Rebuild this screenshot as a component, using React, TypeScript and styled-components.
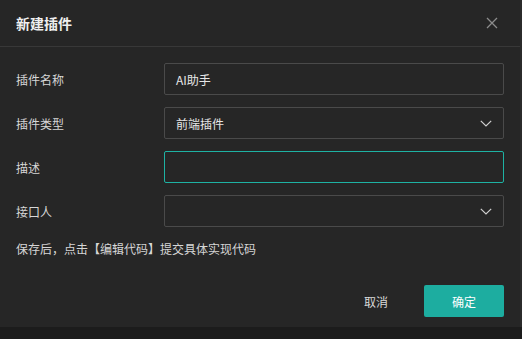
import React from "react";
import styled, { createGlobalStyle } from "styled-components";

const Global = createGlobalStyle`
  html, body { margin: 0; padding: 0; background: #1c1c1c; }
  body { font-family: "Noto Sans CJK SC", "Noto Sans", sans-serif; }
  * { box-sizing: border-box; }
`;

const Stage = styled.div`
  display: flex;
  width: 522px;
  height: 327px;
`;

const Dialog = styled.div`
  width: 520px;
  height: 327px;
  background: #262626;
  display: flex;
  flex-direction: column;
`;

const Strip = styled.div`
  width: 2px;
  background: #2b2b2b;
`;

const Header = styled.div`
  height: 47px;
  display: flex;
  align-items: center;
  justify-content: space-between;
  padding: 0 22px 1px 16px;
  border-bottom: 1px solid #383838;
`;

const Title = styled.div`
  font-size: 14px;
  font-weight: 700;
  color: #efefef;
`;

const Close = styled.button`
  border: 0;
  background: none;
  padding: 0;
  width: 12px;
  height: 12px;
  display: flex;
  cursor: pointer;
`;

const Body = styled.div`
  padding: 16px 16px 0 16px;
  display: flex;
  flex-direction: column;
  gap: 12px;
`;

const Row = styled.div`
  display: flex;
  align-items: center;
  height: 32px;
`;

const Label = styled.div`
  width: 148px;
  font-size: 12px;
  color: #d6d6d6;
`;

const Field = styled.div<{ $focused?: boolean }>`
  flex: 1;
  height: 32px;
  border: 1px solid ${(p) => (p.$focused ? "#1eb2a3" : "#4a4a4a")};
  border-radius: 2px;
  display: flex;
  align-items: center;
  justify-content: space-between;
  padding: 0 11px;
  font-size: 12px;
  color: #e6e6e6;
`;

const Hint = styled.div`
  margin-top: 0px;
  height: 20px;
  line-height: 20px;
  font-size: 12px;
  color: #d6d6d6;
`;

const Footer = styled.div`
  margin-top: auto;
  padding: 0 16px 10px;
  display: flex;
  justify-content: flex-end;
  gap: 8px;
`;

const Btn = styled.button<{ $primary?: boolean }>`
  width: 80px;
  height: 32px;
  border: 0;
  border-radius: 2px;
  font-family: inherit;
  font-size: 12px;
  color: ${(p) => (p.$primary ? "#ffffff" : "#d9d9d9")};
  background: ${(p) => (p.$primary ? "#1dada0" : "transparent")};
  cursor: pointer;
`;

const Chevron = () => (
  <svg width="12" height="7" viewBox="0 0 12 7" fill="none">
    <path d="M0.8 0.8 L6 6 L11.2 0.8" stroke="#d0d0d0" strokeWidth="1.2" />
  </svg>
);

export default function App() {
  return (
    <>
      <Global />
      <Stage>
        <Dialog>
          <Header>
            <Title>新建插件</Title>
            <Close aria-label="close">
              <svg width="12" height="12" viewBox="0 0 12 12">
                <path d="M1 1 L11 11 M11 1 L1 11" stroke="#8c8c8c" strokeWidth="1.3" />
              </svg>
            </Close>
          </Header>
          <Body>
            <Row>
              <Label>插件名称</Label>
              <Field>AI助手</Field>
            </Row>
            <Row>
              <Label>插件类型</Label>
              <Field>
                前端插件
                <Chevron />
              </Field>
            </Row>
            <Row>
              <Label>描述</Label>
              <Field $focused />
            </Row>
            <Row>
              <Label>接口人</Label>
              <Field>
                <span />
                <Chevron />
              </Field>
            </Row>
            <Hint>保存后，点击【编辑代码】提交具体实现代码</Hint>
          </Body>
          <Footer>
            <Btn>取消</Btn>
            <Btn $primary>确定</Btn>
          </Footer>
        </Dialog>
        <Strip />
      </Stage>
    </>
  );
}
